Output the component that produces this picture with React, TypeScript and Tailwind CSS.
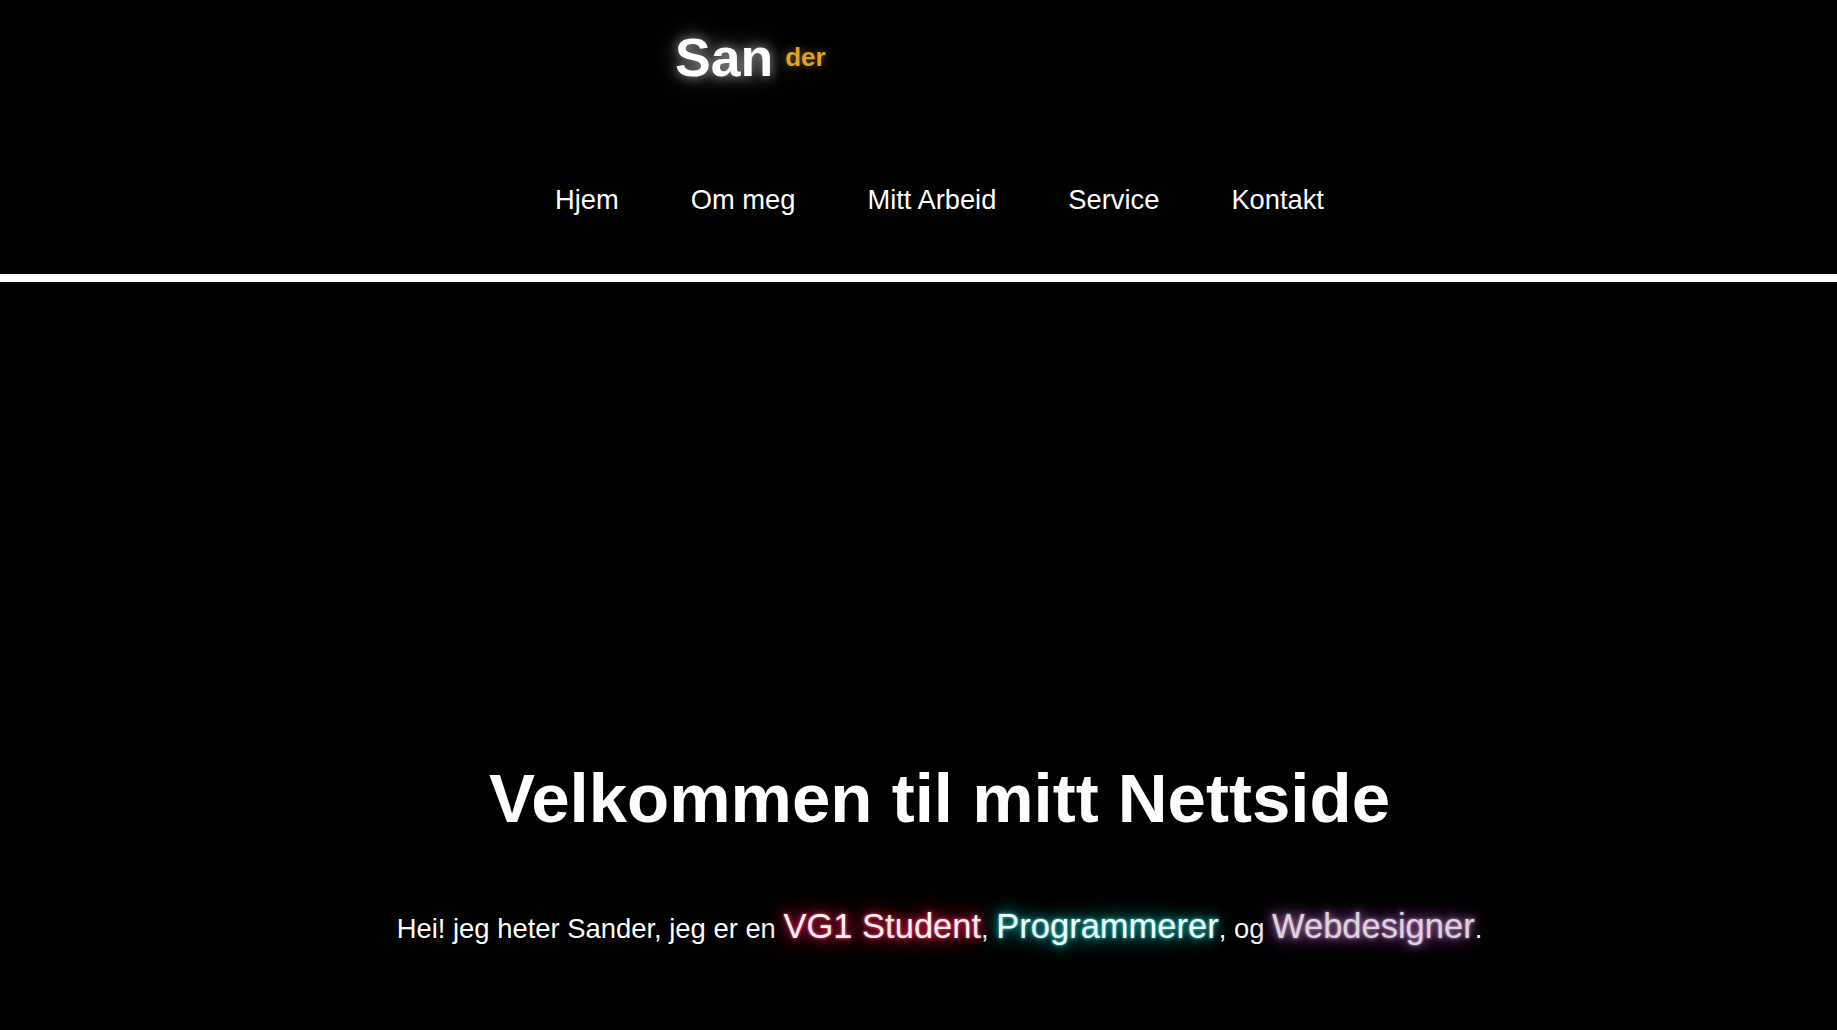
export default function App() {
  const links = ["Hjem", "Om meg", "Mitt Arbeid", "Service", "Kontakt"];

  return (
    <div className="min-h-screen bg-black text-white font-['Liberation_Sans',Arial,sans-serif]">
      {/* Header */}
      <header className="pt-[31px]">
        <div className="pl-[675px] text-[53.5px] leading-[53px] font-bold whitespace-nowrap">
          <span className="[text-shadow:0_0_12px_rgba(255,255,255,0.6),0_0_32px_rgba(255,255,255,0.3)]">
            San
          </span>
          <span className="ml-[12px] text-[26px] text-[#daa520] align-[10px] [text-shadow:0_0_10px_rgba(218,165,32,0.5)]">
            der
          </span>
        </div>

        <nav className="pl-[42px] mt-[102px]">
          <ul className="flex justify-center gap-[72px] text-[27.3px] leading-[27px]">
            {links.map((l) => (
              <li key={l}>
                <a href="#" className="text-white">
                  {l}
                </a>
              </li>
            ))}
          </ul>
        </nav>
      </header>

      <div className="mt-[61px] h-[8px] bg-white" />

      {/* Hero */}
      <section className="pl-[42px] pt-[483px] pb-24 text-center">
        <h1 className="text-[69px] leading-[68px] font-bold">Velkommen til mitt Nettside</h1>
        <p className="mt-[76px] text-[27.4px] leading-[34px] whitespace-nowrap">
          Hei! jeg heter Sander, jeg er en{" "}
          <span className="text-[34.5px] leading-[34px] text-[#fff2f5] [text-shadow:0_0_3px_rgba(255,90,130,0.95),0_0_10px_#d0184e,0_0_20px_#a80c36,0_0_36px_#8a0a2c,0_0_60px_#5a0018]">
            VG1 Student
          </span>
          ,{" "}
          <span className="text-[34.5px] leading-[34px] text-[#effffd] [text-shadow:0_0_3px_rgba(90,230,220,0.95),0_0_10px_#0ea39c,0_0_20px_#0a8580,0_0_36px_#066a66,0_0_60px_#03403e]">
            Programmerer
          </span>
          , og{" "}
          <span className="text-[34.5px] leading-[34px] text-[#dcd4dc] [text-shadow:0_0_3px_rgba(210,150,210,0.95),0_0_10px_#9a5ea2,0_0_20px_#7a4682,0_0_36px_#5c3462,0_0_60px_#38203c]">
            Webdesigner
          </span>
          .
        </p>
      </section>
    </div>
  );
}
